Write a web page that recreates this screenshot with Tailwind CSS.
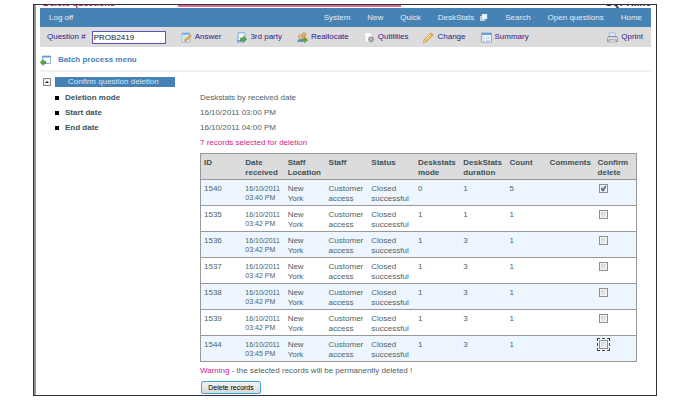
<!DOCTYPE html>
<html lang="en">
<head>
<meta charset="utf-8">
<title>Delete questions</title>
<script src="https://cdn.jsdelivr.net/npm/@tailwindcss/browser@4"></script>
</head>
<body class="bg-white font-['Liberation_Sans',Arial,sans-serif] text-[8px] leading-[10px] text-[#4f6264]">
<div class="mt-1 mr-[39px] ml-[33px] border border-[#333] bg-white">
<div class="border-l-2 border-[#8d9294] pr-[5px] pb-[1px] pl-1">
  <header>
    <div class="flex h-[3px] justify-between overflow-hidden">
      <h1 class="-mt-[6px] w-[138px] pl-[3px] text-[9px] leading-[9px] font-bold text-[#b0206a]">Delete questions</h1>
      <div class="mr-auto h-[2px] w-[223px] bg-[#e0688a]"></div>
      <div class="-mt-[7px] text-[10px] leading-[10px] font-bold text-[#3a2a5c]">SQPRime</div>
    </div>
    <nav class="flex h-[19px] items-center gap-[17px] bg-[#4682b4] pr-[9px] pl-[9px] text-[#e3eef8]">
      <a href="#" class="mr-auto">Log off</a>
      <a href="#">System</a>
      <a href="#">New</a>
      <a href="#">Quick</a>
      <a href="#" class="flex items-center gap-[6px]">DeskStats
        <svg class="size-2" viewBox="0 0 8 8"><path d="M0 2h5v5H0z" fill="#b9d2e6"/><path d="M2 0h5v5H2z" fill="#f4f8fb" stroke="#b9d2e6" stroke-width=".5"/></svg>
      </a>
      <a href="#">Search</a>
      <a href="#">Open questions</a>
      <a href="#">Home</a>
    </nav>
    <div class="flex h-5 items-center gap-[15px] bg-[#dcdcdc] pr-2 pl-[7px] text-[#2a1a90]">
      <div class="flex items-center gap-[6px]">
        <label for="q">Question #</label>
        <input id="q" value="PROB2419" class="h-[13px] w-[74px] border border-[#5a55b8] bg-white px-[1px] text-[#222]">
      </div>
      <a href="#" class="flex items-center gap-[3px]">
        <svg class="size-[11px]" viewBox="0 0 11 11"><path d="M1 1h8v9H1z" fill="#eaf3fb" stroke="#86aed2" stroke-width=".8"/><path d="M1 1h8v2H1z" fill="#87b4dc"/><path d="M2.500 5h4M2.500 7h3" stroke="#a9bfd2" stroke-width=".7"/><path d="M3.500 9.500l.7-2.200L9 3l1.300 1.300-4.600 4.500z" fill="#f3ac3c" stroke="#c9822b" stroke-width=".5"/></svg>Answer</a>
      <a href="#" class="flex items-center gap-[3px]">
        <svg class="size-[11px]" viewBox="0 0 11 11"><path d="M2 .7h7v8L7.500 10H1l1-1.500z" fill="#e8f2fb" stroke="#79a5d0" stroke-width=".9"/><path d="M.6 8h6v2H1.500z" fill="#7aa7d8"/><path d="M4.500 6h3V4.300L10.700 7.300 7.500 10.300V8.600h-3z" fill="#55a744" stroke="#33782c" stroke-width=".5"/></svg>3rd party</a>
      <a href="#" class="flex items-center gap-[3px]">
        <svg class="size-[11px]" viewBox="0 0 11 11"><circle cx="7" cy="2.700" r="2" fill="#e9b57c" stroke="#a8692c" stroke-width=".5"/><path d="M4.500 8c0-4 5.500-4 6 0z" fill="#e79332"/><circle cx="3.200" cy="4.700" r="1.800" fill="#f3c591" stroke="#a8692c" stroke-width=".5"/><path d="M.3 10c0-4 5.700-4 6 0z" fill="#5b93d0"/><path d="M5 7.500h2.500V6L10.700 8.300 7.500 10.700V9.200H5z" fill="#58ad45" stroke="#387d2b" stroke-width=".4"/></svg>Reallocate</a>
      <a href="#" class="flex items-center gap-[3px]">
        <svg class="size-[11px]" viewBox="0 0 11 11"><path d="M1 .5h5l2 2V10H1z" fill="#fafafa" stroke="#ccc" stroke-width=".5"/><circle cx="7" cy="7.300" r="2.300" fill="#bbb" stroke="#777" stroke-width="1.200" stroke-dasharray="1.100 .7"/><circle cx="7" cy="7.300" r="1" fill="#f6f6f6" stroke="#777" stroke-width=".5"/></svg>Qutilities</a>
      <a href="#" class="flex items-center gap-[3px]">
        <svg class="size-[11px]" viewBox="0 0 11 11"><path d="M.7 10.300L1.500 7.300 8 .8l2.200 2.200-6.500 6.500z" fill="#f6bf55" stroke="#cf8732" stroke-width=".6"/><path d="M2.500 7.500l5.500-5.500" stroke="#fde6a6"/><path d="M7 1.800L8 .8l2.200 2.200-1 1z" fill="#e69a63"/><path d="M.7 10.300l.8-3 2.200 2.200z" fill="#f3dfbe" stroke="#b47b3a" stroke-width=".4"/></svg>Change</a>
      <a href="#" class="mr-auto flex items-center gap-[3px]">
        <svg class="size-[11px]" viewBox="0 0 11 11"><path d="M.5 1h10v9H.5z" fill="#f7fbff" stroke="#6b9bd0" stroke-width=".8"/><path d="M.5 1h10v2H.5z" fill="#69a0dc"/><path d="M1.500 4.200h2.500v5H1.500z" fill="#d3e4f5"/><path d="M5 5h4M5 6.700h4M5 8.400h4" stroke="#a9bfd5" stroke-width=".7"/></svg>Summary</a>
      <a href="#" class="flex items-center gap-[3px]">
        <svg class="size-[11px]" viewBox="0 0 11 11"><path d="M2.500 5V.7h5L8.500 2v3z" fill="#d5e8fb" stroke="#7fa3c9" stroke-width=".6"/><path d="M1.500 4.500h8l1.200 1.500v3.500H.3V6z" fill="#c3c7cd" stroke="#666c76" stroke-width=".6"/><path d="M.7 6.300h9.600" stroke="#f3f3f3" stroke-width=".7"/><path d="M2 8h7v2H2z" fill="#f2f2f2" stroke="#777" stroke-width=".5"/></svg>Qprint</a>
    </div>
    <div class="flex h-[25px] items-center gap-[7px] border-b-2 border-[#f2f2f2] pt-[3px] font-bold text-[#4682b4]">
      <svg class="size-[11px]" viewBox="0 0 11 11"><path d="M2.500 1h8v7.500h-8z" fill="#fbfdff" stroke="#6f9fd6" stroke-width=".8"/><path d="M2.500 1h8v1.500h-8z" fill="#5f97d8"/><path d="M.2 7.500L3.300 4.500v1.700h2.700v2.600H3.300v1.700z" fill="#55a545" stroke="#33752b" stroke-width=".5"/></svg>
      <a href="#">Batch process menu</a>
    </div>
  </header>
  <main class="pr-[14px] pl-[3px]">
    <div class="mt-[5px] flex items-center gap-1">
      <button type="button" aria-label="Collapse section" class="flex size-2 items-center justify-center border border-[#888] bg-[#f4f4f4]"><svg class="size-1" viewBox="0 0 4 4"><path d="M0 3l2-2 2 2z" fill="#222"/></svg></button>
      <h2 class="w-[120px] bg-[#4682b4] pl-[13px] text-[#d8e8f6]">Confirm question deletion</h2>
    </div>
    <dl class="mt-[3px] grid grid-cols-[157px_1fr] leading-[15px]">
      <dt class="flex items-center gap-[6px] pl-3 font-bold text-[#3c5257]"><span class="size-1 bg-black"></span>Deletion mode</dt><dd>Deskstats by received date</dd>
      <dt class="flex items-center gap-[6px] pl-3 font-bold text-[#3c5257]"><span class="size-1 bg-black"></span>Start date</dt><dd>16/10/2011 03:00 PM</dd>
      <dt class="flex items-center gap-[6px] pl-3 font-bold text-[#3c5257]"><span class="size-1 bg-black"></span>End date</dt><dd>16/10/2011 04:00 PM</dd>
    </dl>
    <section class="pl-[157px]">
      <p class="leading-[15px] text-[#d02090]">7 records selected for deletion</p>
      <table class="mt-[3px] w-full table-fixed border-collapse border border-[#999] text-left [&_input]:ml-[1px] [&_input]:block [&_input]:size-[9px] [&_input]:appearance-none [&_input]:border [&_input]:border-[#8e8f8f] [&_input]:bg-linear-to-br [&_input]:from-[#c9ccd1] [&_input]:to-[#f6f6f6] [&_input]:shadow-[inset_0_0_0_1px_#f4f4f4] [&_td]:px-[3px] [&_td]:pt-1 [&_td]:align-top [&_th]:px-[3px] [&_th]:pt-1 [&_th]:align-top [&_tr]:h-[26px] [&_tr]:border-b [&_tr]:border-[#999]">
        <colgroup><col class="w-[9.6%]"><col class="w-[9.7%]"><col class="w-[9.4%]"><col class="w-[9.8%]"><col class="w-[10.7%]"><col class="w-[10.4%]"><col class="w-[10.6%]"><col class="w-[9.2%]"><col class="w-[11%]"><col></colgroup>
        <thead><tr class="bg-[#dcdcdc] text-[#3c5257]"><th>ID</th><th>Date<br>received</th><th>Staff<br>Location</th><th>Staff</th><th>Status</th><th>Deskstats<br>mode</th><th>DeskStats<br>duration</th><th>Count</th><th>Comments</th><th>Confirm<br>delete</th></tr></thead>
        <tbody>
          <tr class="bg-[#edf6fe]"><td>1540</td><td class="text-[7px] leading-[9px]">16/10/2011<br>03:40 PM</td><td>New<br>York</td><td>Customer<br>access</td><td>Closed<br>successful</td><td>0</td><td>1</td><td>5</td><td></td><td><div class="grid w-[10px]"><input type="checkbox" checked aria-label="Delete 1540" class="col-start-1 row-start-1"><svg class="pointer-events-none col-start-1 row-start-1 ml-[1px] size-[9px]" viewBox="0 0 9 9"><path d="M2.300 4.200L4 6.500 6.800 2" fill="none" stroke="#34509c" stroke-width="1.400"/></svg></div></td></tr>
          <tr><td>1535</td><td class="text-[7px] leading-[9px]">16/10/2011<br>03:42 PM</td><td>New<br>York</td><td>Customer<br>access</td><td>Closed<br>successful</td><td>1</td><td>1</td><td>1</td><td></td><td><input type="checkbox" aria-label="Delete 1535"></td></tr>
          <tr class="bg-[#edf6fe]"><td>1536</td><td class="text-[7px] leading-[9px]">16/10/2011<br>03:42 PM</td><td>New<br>York</td><td>Customer<br>access</td><td>Closed<br>successful</td><td>1</td><td>3</td><td>1</td><td></td><td><input type="checkbox" aria-label="Delete 1536"></td></tr>
          <tr><td>1537</td><td class="text-[7px] leading-[9px]">16/10/2011<br>03:42 PM</td><td>New<br>York</td><td>Customer<br>access</td><td>Closed<br>successful</td><td>1</td><td>3</td><td>1</td><td></td><td><input type="checkbox" aria-label="Delete 1537"></td></tr>
          <tr class="bg-[#edf6fe]"><td>1538</td><td class="text-[7px] leading-[9px]">16/10/2011<br>03:42 PM</td><td>New<br>York</td><td>Customer<br>access</td><td>Closed<br>successful</td><td>1</td><td>3</td><td>1</td><td></td><td><input type="checkbox" aria-label="Delete 1538"></td></tr>
          <tr><td>1539</td><td class="text-[7px] leading-[9px]">16/10/2011<br>03:42 PM</td><td>New<br>York</td><td>Customer<br>access</td><td>Closed<br>successful</td><td>1</td><td>3</td><td>1</td><td></td><td><input type="checkbox" aria-label="Delete 1539"></td></tr>
          <tr class="bg-[#edf6fe]"><td>1544</td><td class="text-[7px] leading-[9px]">16/10/2011<br>03:45 PM</td><td>New<br>York</td><td>Customer<br>access</td><td>Closed<br>successful</td><td>1</td><td>3</td><td>1</td><td></td><td><input type="checkbox" aria-label="Delete 1544" class="outline outline-offset-1 outline-dashed outline-[#444]"></td></tr>
        </tbody>
      </table>
      <p class="mt-1"><span class="text-[#d02090]">Warning</span> - the selected records will be permanently deleted !</p>
      <button type="button" class="mt-[5px] ml-[1px] block h-[13px] w-[60px] rounded-[2px] border border-[#3ea6cf] bg-linear-to-b from-[#f4f4f4] to-[#d4d8da] text-[7px] leading-[9px] whitespace-nowrap text-black">Delete records</button>
    </section>
  </main>
</div>
</div>
</body>
</html>
